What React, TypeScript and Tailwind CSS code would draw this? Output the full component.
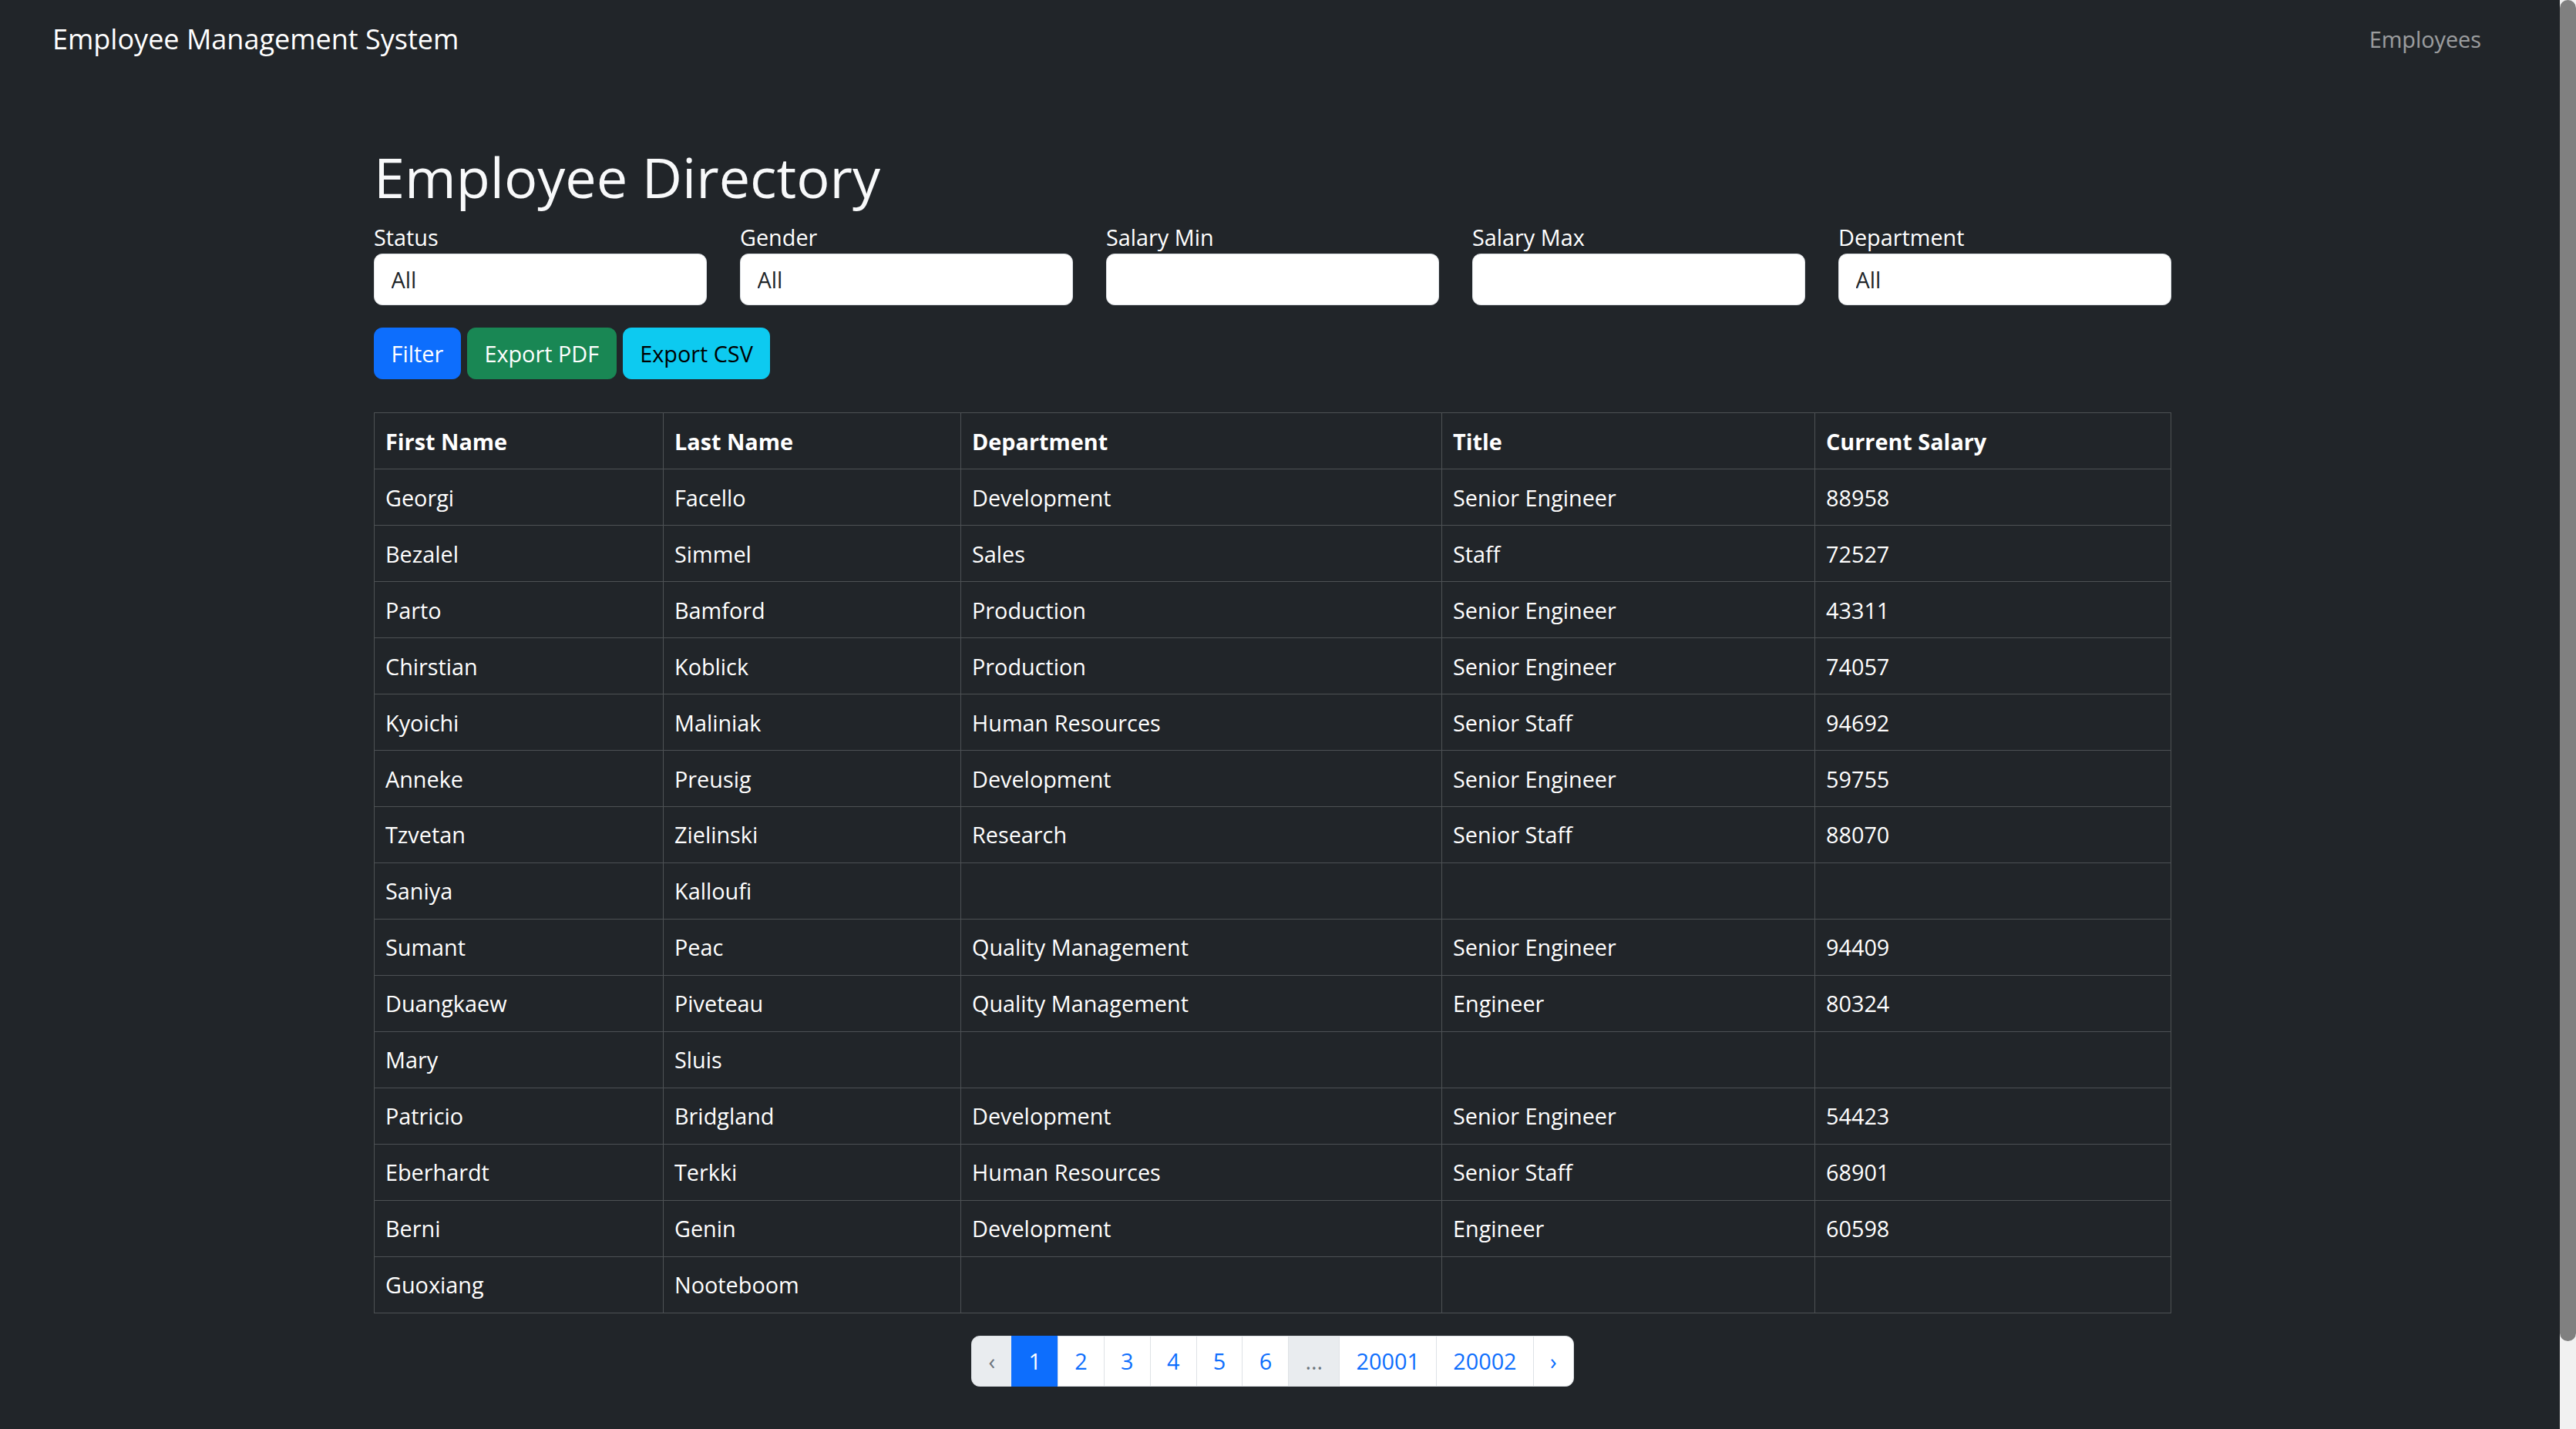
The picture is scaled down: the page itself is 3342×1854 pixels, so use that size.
import React from "react";

type Employee = {
  first: string;
  last: string;
  dept: string;
  title: string;
  salary: string;
};

const employees: Employee[] = [
  { first: "Georgi", last: "Facello", dept: "Development", title: "Senior Engineer", salary: "88958" },
  { first: "Bezalel", last: "Simmel", dept: "Sales", title: "Staff", salary: "72527" },
  { first: "Parto", last: "Bamford", dept: "Production", title: "Senior Engineer", salary: "43311" },
  { first: "Chirstian", last: "Koblick", dept: "Production", title: "Senior Engineer", salary: "74057" },
  { first: "Kyoichi", last: "Maliniak", dept: "Human Resources", title: "Senior Staff", salary: "94692" },
  { first: "Anneke", last: "Preusig", dept: "Development", title: "Senior Engineer", salary: "59755" },
  { first: "Tzvetan", last: "Zielinski", dept: "Research", title: "Senior Staff", salary: "88070" },
  { first: "Saniya", last: "Kalloufi", dept: "", title: "", salary: "" },
  { first: "Sumant", last: "Peac", dept: "Quality Management", title: "Senior Engineer", salary: "94409" },
  { first: "Duangkaew", last: "Piveteau", dept: "Quality Management", title: "Engineer", salary: "80324" },
  { first: "Mary", last: "Sluis", dept: "", title: "", salary: "" },
  { first: "Patricio", last: "Bridgland", dept: "Development", title: "Senior Engineer", salary: "54423" },
  { first: "Eberhardt", last: "Terkki", dept: "Human Resources", title: "Senior Staff", salary: "68901" },
  { first: "Berni", last: "Genin", dept: "Development", title: "Engineer", salary: "60598" },
  { first: "Guoxiang", last: "Nooteboom", dept: "", title: "", salary: "" },
];

const filters = [
  { label: "Status", value: "All" },
  { label: "Gender", value: "All" },
  { label: "Salary Min", value: "" },
  { label: "Salary Max", value: "" },
  { label: "Department", value: "All" },
];

const pages = [
  { text: "\u2039", kind: "disabled" },
  { text: "1", kind: "active" },
  { text: "2", kind: "link" },
  { text: "3", kind: "link" },
  { text: "4", kind: "link" },
  { text: "5", kind: "link" },
  { text: "6", kind: "link" },
  { text: "...", kind: "disabled" },
  { text: "20001", kind: "link" },
  { text: "20002", kind: "link" },
  { text: "\u203a", kind: "link" },
];

const cell = "border border-[#4d5154] px-[14px] py-[14.4px] leading-[43.2px] text-left align-top";
const btn = "border rounded-[10.8px] px-[21.6px] h-[67px]";

function Pagination() {
  return (
    <ul className="flex justify-center mt-[29px]">
      {pages.map((p, i) => {
        const first = i === 0;
        const last = i === pages.length - 1;
        let tone = "bg-white text-[#0d6efd] border-[#dee2e6]";
        if (p.kind === "active") tone = "bg-[#0d6efd] text-white border-[#0d6efd]";
        if (p.kind === "disabled") tone = "bg-[#e9ecef] text-[#6c757d] border-[#dee2e6]";
        return (
          <li
            key={i}
            className={
              "border px-[21.2px] py-[10.5px] leading-[43.2px] " +
              tone +
              (first ? " rounded-l-[10.8px]" : " -ml-px") +
              (last ? " rounded-r-[10.8px]" : "")
            }
          >
            {p.text}
          </li>
        );
      })}
    </ul>
  );
}

export default function App() {
  return (
    <div
      className="flex h-[1854px] overflow-hidden bg-[#212529] text-white text-[28.8px]"
      style={{ fontFamily: '"Open Sans", "Noto Sans", sans-serif' }}
    >
      <div className="flex-1 min-w-0">
        <nav className="flex items-center justify-between h-[101px] pl-[68px] pr-[102px]">
          <span className="text-[36px] leading-[54px]">Employee Management System</span>
          <span className="text-white/55">Employees</span>
        </nav>

        <main className="w-[2332px] ml-[485px] pt-[85px]">
          <h1 className="text-[72px] leading-[86px] text-[#f8f9fa] mb-[14px]">Employee Directory</h1>

          <div className="grid grid-cols-5 gap-x-[43px]">
            {filters.map((f) => (
              <div key={f.label} className="flex flex-col">
                <label className="leading-[43.2px]">{f.label}</label>
                <input
                  readOnly
                  value={f.value}
                  className="h-[67px] bg-white border border-[#dee2e6] rounded-[10.8px] px-[21.6px] text-[#212529] outline-none"
                />
              </div>
            ))}
          </div>

          <div className="flex gap-[8px] mt-[29px]">
            <button className={btn + " bg-[#0d6efd] border-[#0d6efd] text-white"}>Filter</button>
            <button className={btn + " bg-[#198754] border-[#198754] text-white"}>Export PDF</button>
            <button className={btn + " bg-[#0dcaf0] border-[#0dcaf0] text-black"}>Export CSV</button>
          </div>

          <table className="w-full table-fixed border-collapse mt-[43px]">
            <colgroup>
              <col className="w-[375px]" />
              <col className="w-[386px]" />
              <col className="w-[624px]" />
              <col className="w-[484px]" />
              <col className="w-[462px]" />
            </colgroup>
            <thead>
              <tr className="font-bold">
                <th className={cell}>First Name</th>
                <th className={cell}>Last Name</th>
                <th className={cell}>Department</th>
                <th className={cell}>Title</th>
                <th className={cell}>Current Salary</th>
              </tr>
            </thead>
            <tbody>
              {employees.map((e) => (
                <tr key={e.first + e.last}>
                  <td className={cell}>{e.first}</td>
                  <td className={cell}>{e.last}</td>
                  <td className={cell}>{e.dept}</td>
                  <td className={cell}>{e.title}</td>
                  <td className={cell}>{e.salary}</td>
                </tr>
              ))}
            </tbody>
          </table>

          <Pagination />
        </main>
      </div>

      {/* scrollbar */}
      <div className="w-[21px] shrink-0 bg-[#f1f1f1] flex flex-col">
        <div className="h-[1740px] bg-[#808080] rounded-b-full rounded-t-full" />
      </div>
    </div>
  );
}
